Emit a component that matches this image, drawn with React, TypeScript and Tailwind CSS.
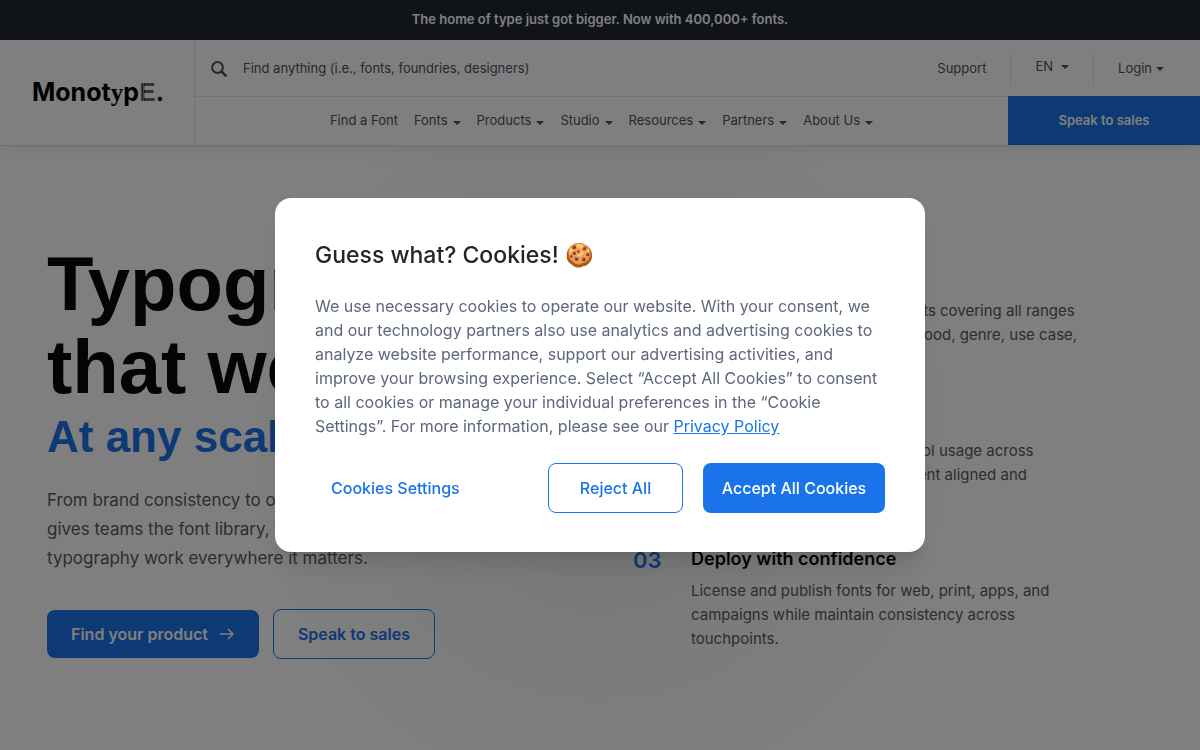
import { ReactNode } from "react";

const navItems = [
  { label: "Find a Font", menu: false },
  { label: "Fonts", menu: true },
  { label: "Products", menu: true },
  { label: "Studio", menu: true },
  { label: "Resources", menu: true },
  { label: "Partners", menu: true },
  { label: "About Us", menu: true },
];

const steps = [
  {
    number: "01",
    title: "Find the right type",
    lines: ["Search a library of 400,000+ fonts covering all ranges", "of expression. Search fonts by mood, genre, use case,", "and much more."],
  },
  {
    number: "02",
    title: "Manage in one place",
    lines: ["Organize all your fonts and control usage across", "teams, and keep all of your content aligned and", "on brand."],
  },
  {
    number: "03",
    title: "Deploy with confidence",
    lines: ["License and publish fonts for web, print, apps, and", "campaigns while maintain consistency across", "touchpoints."],
  },
];

function Caret() {
  return (
    <svg className="h-1 w-2 shrink-0" viewBox="0 0 8 4" fill="currentColor" aria-hidden="true">
      <path d="M0 0h8L4 4z" />
    </svg>
  );
}

function MenuButton({ children }: { children: ReactNode }) {
  return (
    <button type="button" className="flex items-center gap-[5px]">
      {children}
      <span className="pt-1">
        <Caret />
      </span>
    </button>
  );
}

function Logo() {
  return (
    <a href="#" aria-label="Monotype" className="flex items-baseline text-[25px] leading-8 font-bold text-black">
      <span>Monot</span>
      <span className="font-['Liberation_Serif',serif]">y</span>
      <span>p</span>
      <span className="bg-[linear-gradient(90deg,#999_0_3px,#333_3px_4px,#999_4px_5px,#333_5px_6px,#666_6px)] bg-clip-text font-['Liberation_Sans',sans-serif] text-transparent">
        E
      </span>
      <span>.</span>
    </a>
  );
}

function Header() {
  return (
    <header className="relative flex border-b border-gray-200 bg-white text-[13px] text-[#4b5160] shadow-lg shadow-black/5">
      <div className="flex w-[195px] shrink-0 items-center border-r border-gray-200 pl-8">
        <Logo />
      </div>
      <div className="flex min-w-0 flex-1 flex-col">
        <div className="flex h-14 items-center pt-[2px] pr-9 pl-4">
          <label className="flex flex-1 items-center gap-4">
            <svg className="size-4" viewBox="0 0 16 16" fill="none" stroke="currentColor" strokeWidth="2" aria-hidden="true">
              <circle cx="6.5" cy="6.5" r="5.4" />
              <path d="M10.4 10.4l5 5" strokeWidth="2.6" />
            </svg>
            <input
              type="search"
              aria-label="Search"
              placeholder="Find anything (i.e., fonts, foundries, designers)"
              className="flex-1 bg-transparent outline-none placeholder:text-[#4b5160]"
            />
          </label>
          <a href="#" className="pr-6">Support</a>
          <div className="border-x border-gray-200 px-6 pt-1 pb-2">
            <button type="button" className="flex items-center gap-2">
              EN <Caret />
            </button>
          </div>
          <button type="button" className="flex items-center gap-1 pl-6">
            Login <Caret />
          </button>
        </div>
        <div className="flex h-[49px] border-t border-gray-200">
          <nav className="flex flex-1 items-center justify-center gap-4">
            {navItems.map((item) =>
              item.menu ? (
                <MenuButton key={item.label}>{item.label}</MenuButton>
              ) : (
                <a key={item.label} href="#">{item.label}</a>
              ),
            )}
          </nav>
          <a href="#" className="-mt-px flex w-48 items-center justify-center bg-[#1a73e8] font-semibold text-white">
            Speak to sales
          </a>
        </div>
      </div>
    </header>
  );
}

function Hero() {
  return (
    <main className="flex flex-1 items-start bg-[radial-gradient(circle_at_50%_50%,#eaeef0_0%,#f5f7f7_30%,#ffffff_55%)] px-[47px] pt-24">
      <section className="w-[586px] shrink-0">
        <h1 className="font-['Liberation_Sans',sans-serif] text-[76px] leading-[83px] font-bold whitespace-nowrap text-[#080808]">
          Typography
          <br />
          that works.
          <span className="block pt-1 text-[44px] leading-[50px] text-[#1a73e8]">At any scale.</span>
        </h1>
        <p className="pt-6 text-[17px] leading-[29px] whitespace-nowrap text-[#5a5a5a]">
          From brand consistency to output, Monotype
          <br />
          gives teams the font library, tools and expertise to make
          <br />
          typography work everywhere it matters.
        </p>
        <div className="flex items-center gap-[14px] pt-9 text-base font-semibold">
          <a href="#" className="flex h-12 items-center gap-[11px] rounded-lg bg-[#1a73e8] px-6 text-white">
            Find your product
            <svg className="h-3 w-4" viewBox="0 0 16 12" fill="none" stroke="currentColor" strokeWidth="1.5" aria-hidden="true">
              <path d="M1 6h13M9 1l5 5-5 5" />
            </svg>
          </a>
          <a href="#" className="flex h-[50px] items-center rounded-lg border border-[#1a73e8] px-6 text-[#1a73e8]">
            Speak to sales
          </a>
        </div>
      </section>
      <ol className="flex flex-col gap-9 pt-[25px]">
        {steps.map((step) => (
          <li key={step.number} className="flex">
            <span className="w-[58px] shrink-0 text-[22px] leading-[26px] font-semibold text-[#1a73e8]">{step.number}</span>
            <div>
              <h2 className="pb-2 text-lg leading-6 font-semibold text-[#080808]">{step.title}</h2>
              <p className="text-[15px] leading-6 whitespace-nowrap text-[#5a5a5a]">
                {step.lines.map((line) => (
                  <span key={line} className="block">{line}</span>
                ))}
              </p>
            </div>
          </li>
        ))}
      </ol>
    </main>
  );
}

function CookieDialog() {
  return (
    <div className="fixed inset-0 flex items-center justify-center bg-black/50">
      <div
        role="dialog"
        aria-modal="true"
        aria-labelledby="cookie-title"
        className="w-[650px] max-w-full rounded-2xl bg-white px-10 pt-10 pb-[39px] shadow-xl"
      >
        <h2 id="cookie-title" className="text-[23px] leading-[34px] font-medium text-[#20262e]">
          Guess what? Cookies! 🍪
        </h2>
        <p className="pt-[22px] text-base leading-6 text-[#5d677b]">
          We use necessary cookies to operate our website. With your consent, we and our technology partners also use
          analytics and advertising cookies to analyze website performance, support our advertising activities, and
          improve your browsing experience. Select “Accept All Cookies” to consent to all cookies or manage your
          individual preferences in the “Cookie Settings”. For more information, please see our{" "}
          <a href="#" className="text-[#1a73e8] underline">Privacy Policy</a>
        </p>
        <div className="flex items-center gap-5 pt-[25px] text-base font-medium">
          <button type="button" className="mr-auto px-4 text-[#1a73e8]">Cookies Settings</button>
          <button type="button" className="h-[50px] w-[135px] rounded-lg border border-[#1a73e8] text-[#1a73e8]">
            Reject All
          </button>
          <button type="button" className="h-[50px] w-[182px] rounded-lg bg-[#1a73e8] text-white">
            Accept All Cookies
          </button>
        </div>
      </div>
    </div>
  );
}

export default function App() {
  return (
    <div className="flex h-screen flex-col overflow-hidden bg-white font-['Inter','Liberation_Sans',sans-serif]">
      <div className="flex h-10 shrink-0 items-center justify-center bg-[#20262e] text-[13px] font-semibold text-white">
        The home of type just got bigger. Now with 400,000+ fonts.
      </div>
      <Header />
      <Hero />
      <CookieDialog />
    </div>
  );
}
